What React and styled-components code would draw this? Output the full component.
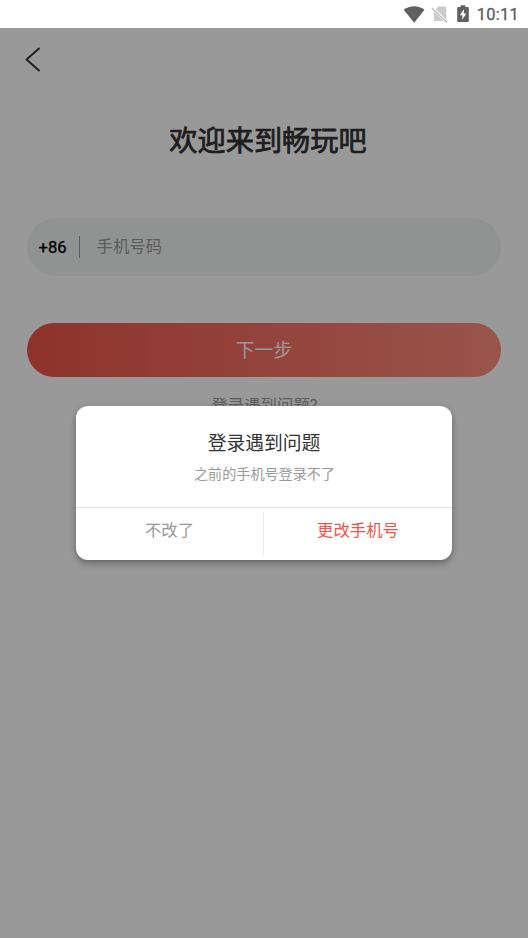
import React from "react";
import styled, { createGlobalStyle } from "styled-components";

const GlobalStyle = createGlobalStyle`
  * { box-sizing: border-box; }
  body {
    margin: 0;
    background: #fff;
    font-family: Roboto, "Noto Sans CJK SC", sans-serif;
  }
  button { font-family: inherit; border: 0; padding: 0; background: none; }
`;

const Screen = styled.div`
  width: 528px;
  height: 938px;
  display: flex;
  flex-direction: column;
  overflow: hidden;
`;

const StatusBar = styled.header`
  height: 28px;
  flex: none;
  display: flex;
  align-items: center;
  justify-content: flex-end;
  padding-right: 9px;
  color: #606060;
`;

const StatusIcons = styled.div`
  display: flex;
  align-items: center;
  height: 28px;
`;

const StatusIcon = styled.svg`
  display: block;
  width: ${(p) => p.$w}px;
  height: 28px;
  margin-right: ${(p) => p.$gap}px;
`;

const Clock = styled.time`
  font-size: 16.5px;
  font-weight: 400;
  -webkit-text-stroke: 0.35px #606060;
  line-height: 28px;
  letter-spacing: 0.25px;
  padding-top: 2px;
`;

const Page = styled.main`
  flex: 1;
  position: relative;
  display: flex;
  flex-direction: column;
  padding: 0 27px;
`;

const BackButton = styled.button`
  width: 20px;
  height: 28px;
  margin: 18px 0 0 -4px;
  display: block;
`;

const Title = styled.h1`
  margin: 47px 0 0;
  padding-left: 8px;
  text-align: center;
  font-size: 28.2px;
  line-height: 42px;
  font-weight: 400;
  color: #333;
  -webkit-text-stroke: 0.75px #333;
`;

const PhoneField = styled.div`
  height: 58px;
  margin-top: 55px;
  border-radius: 29px;
  background: #f2f5f4;
  display: flex;
  align-items: center;
  padding-left: 11.5px;
`;

const CountryCode = styled.span`
  font-size: 16.6px;
  font-weight: 400;
  -webkit-text-stroke: 0.3px #000;
  color: #000;
  width: 40.5px;
  padding-top: 1px;
`;

const FieldDivider = styled.span`
  width: 1px;
  height: 22px;
  background: #999;
`;

const Placeholder = styled.span`
  margin-left: 16.5px;
  font-size: 16.4px;
  line-height: 24px;
  color: #999;
`;

const NextButton = styled.button`
  height: 54px;
  flex: none;
  margin-top: 47px;
  padding-top: 2px;
  border-radius: 27px;
  background: linear-gradient(90deg, #ed5549, #ff8d7e);
  color: #fff;
  font-size: 18.8px;
  line-height: 52px;
`;

const HelpLink = styled.a`
  margin-top: 17px;
  padding-left: 1px;
  text-align: center;
  font-size: 16.4px;
  line-height: 24px;
  color: #999;
`;

const Overlay = styled.div`
  position: absolute;
  inset: 0;
  background: rgba(0, 0, 0, 0.4);
  display: flex;
  justify-content: center;
  align-items: flex-start;
  padding-top: 378px;
`;

const Dialog = styled.section`
  width: 376px;
  height: 154px;
  border-radius: 12px;
  background: #fff;
  box-shadow: 0 3px 7px rgba(0, 0, 0, 0.34);
  display: flex;
  flex-direction: column;
  text-align: center;
`;

const DialogBody = styled.div`
  height: 102px;
  flex: none;
  padding-top: 24px;
  border-bottom: 1px solid #e6e6e6;
`;

const DialogTitle = styled.h2`
  margin: 0;
  font-size: 18.8px;
  line-height: 28px;
  font-weight: 400;
  color: #333;
`;

const DialogText = styled.p`
  margin: 6px 0 0;
  padding-left: 1px;
  font-size: 14.1px;
  line-height: 20px;
  color: #999;
`;

const DialogActions = styled.div`
  flex: 1;
  display: grid;
  grid-template-columns: 187px 1px 188px;
  align-items: center;
`;

const ActionButton = styled.button`
  height: 44px;
  padding-bottom: 6px;
  font-size: 16.4px;
  line-height: 24px;
  color: ${(p) => (p.$primary ? "#f05548" : "#999")};
`;

const ActionDivider = styled.span`
  height: 44px;
  background: #ebebeb;
`;

export default function App() {
  return (
    <Screen>
      <GlobalStyle />
      <StatusBar>
        <StatusIcons>
          <StatusIcon $w={22} $gap={6} viewBox="0 0 22 28">
            <path d="M.7 9.8C6.5 5 15.700 5 21.500 9.800L11.100 22.700Z" fill="#606060" />
          </StatusIcon>
          <StatusIcon $w={18} $gap={8} viewBox="0 0 18 28">
            <path d="M7.300 6.500H14a1.300 1.300 0 0 1 1.300 1.300V21H3V11Z" fill="#cbcbcb" />
            <path d="M1 7.600L16 22.300" stroke="#fff" strokeWidth="3" />
            <path d="M.9 8L15.900 22.500" stroke="#bdbdbd" strokeWidth="1.400" />
          </StatusIcon>
          <StatusIcon $w={12} $gap={7.5} viewBox="0 0 12 28">
            <path d="M1.200 7H3.700V5.300H8.300V7H10.800q1 0 1 1V21q0 1-1 1H1.200q-1 0-1-1V8q0-1 1-1Z" fill="#606060" />
            <path d="M6.900 9.300L2.700 15.300H5.300V19.700L9.300 13.600H6.900Z" fill="#fff" />
          </StatusIcon>
        </StatusIcons>
        <Clock>10:11</Clock>
      </StatusBar>
      <Page>
        <BackButton aria-label="返回">
          <svg width="20" height="28" viewBox="0 0 20 28" fill="none">
            <path d="M16 2.500L3.500 13.500L16 24.500" stroke="#333" strokeWidth="1.900" strokeLinecap="round" strokeLinejoin="round" />
          </svg>
        </BackButton>
        <Title>欢迎来到畅玩吧</Title>
        <PhoneField>
          <CountryCode>+86</CountryCode>
          <FieldDivider />
          <Placeholder>手机号码</Placeholder>
        </PhoneField>
        <NextButton>下一步</NextButton>
        <HelpLink>登录遇到问题?</HelpLink>
        <Overlay>
          <Dialog role="dialog">
            <DialogBody>
              <DialogTitle>登录遇到问题</DialogTitle>
              <DialogText>之前的手机号登录不了</DialogText>
            </DialogBody>
            <DialogActions>
              <ActionButton>不改了</ActionButton>
              <ActionDivider />
              <ActionButton $primary>更改手机号</ActionButton>
            </DialogActions>
          </Dialog>
        </Overlay>
      </Page>
    </Screen>
  );
}
